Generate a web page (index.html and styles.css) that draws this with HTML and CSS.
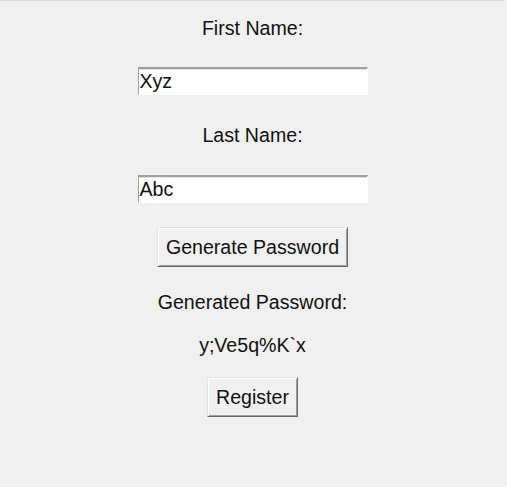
FILE: index.html
```html
<!DOCTYPE html>
<html>
<head>
<meta charset="utf-8">
<link rel="stylesheet" href="styles.css">
</head>
<body>
<div class="app">
  <div class="label label-first">First Name:</div>
  <div class="entry entry-first">Xyz</div>
  <div class="label label-last">Last Name:</div>
  <div class="entry entry-last">Abc</div>
  <div class="btn btn-generate">Generate Password</div>
  <div class="label label-generated">Generated Password:</div>
  <div class="label label-password">y;Ve5q%K`x</div>
  <div class="btn btn-register">Register</div>
</div>
</body>
</html>
```
FILE: styles.css
```css
html, body {
  margin: 0;
  padding: 0;
  background: #f0f0f0;
}
body {
  width: 507px;
  height: 487px;
  overflow: hidden;
}
.app {
  width: 505px;
  height: 486px;
  border-top: 1px solid #d9d9d9;
  display: flex;
  flex-direction: column;
  align-items: center;
  padding-top: 16px;
  box-sizing: content-box;
  font-family: "Liberation Sans", Arial, sans-serif;
  font-size: 19.6px;
  color: #111;
}
.label {
  line-height: 22px;
  height: 22px;
  white-space: nowrap;
}
.label-last { margin-top: 29px; }
.label-generated { margin-top: 24px; }
.label-password { margin-top: 21px; }
.entry {
  box-sizing: border-box;
  width: 230px;
  height: 28px;
  background: #fff;
  border-top: 2px solid #a0a0a0;
  border-left: 1px solid #a0a0a0;
  border-right: 1px solid #ffffff;
  border-bottom: 1px solid #ffffff;
  box-shadow: inset 0 1px 0 #e3e3e3;
  padding-left: 1px;
  line-height: 25px;
  white-space: nowrap;
}
.entry-first { margin-top: 28px; }
.entry-last { margin-top: 29px; }
.btn {
  box-sizing: border-box;
  height: 40px;
  border: 1px solid;
  border-color: #e3e3e3 #696969 #696969 #e3e3e3;
  box-shadow: inset 1px 1px 0 #ffffff, inset -1px -1px 0 #a0a0a0;
  background: #f0f0f0;
  line-height: 38px;
  white-space: nowrap;
  display: flex;
  align-items: center;
  justify-content: center;
  padding-left: 8px;
  padding-right: 8px;
}
.btn-generate { margin-top: 24px; }
.btn-register { margin-top: 21px; }
```
